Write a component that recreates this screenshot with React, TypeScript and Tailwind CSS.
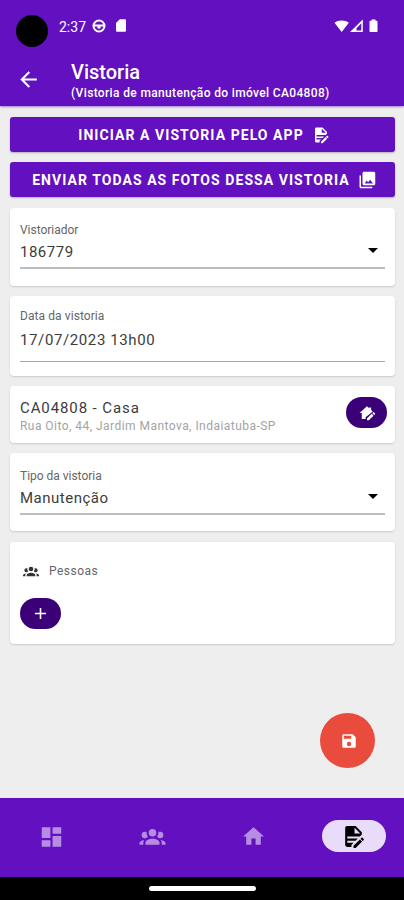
import type { ReactNode } from 'react';

const paths = {
  back: 'M20,11V13H8L13.5,18.5L12.08,19.92L4.16,12L12.08,4.08L13.5,5.5L8,11H20Z',
  fileEdit:
    'M6,2C4.89,2 4,2.89 4,4V20A2,2 0 0,0 6,22H10V20.09L12.09,18H6V16H14.09L16.09,14H6V12H18.09L20,10.09V8L14,2H6M13,3.5L18.5,9H13V3.5M20.15,13C20,13 19.86,13.05 19.75,13.16L18.73,14.18L20.82,16.26L21.84,15.25C22.05,15.03 22.05,14.67 21.84,14.46L20.54,13.16C20.43,13.05 20.29,13 20.15,13M18.14,14.77L12,20.92V23H14.08L20.23,16.85L18.14,14.77Z',
  photos: 'M23,17V3C23,1.900 22.100,1 21,1H8C6.9,1 6,1.900 6,3V17C6,18.100 6.9,19 8,19H21C22.100,19 23,18.100 23,17M11.500,12.500L13.500,15L16.200,11.700L20,16.500H9L11.500,12.500M2,6V21C2,22.100 2.9,23 4,23H19V21H4V6H2Z',
  homeEdit:
    'M12,3L2,12H5V20H10.2V17.6L19.7,9.9L17.5,7.95V4.5H15V5.7L12,3M20.8,10.9C20.6,10.9 20.4,11 20.3,11.1L19.1,12.3L21.5,14.7L22.7,13.5C22.9,13.2 22.9,12.9 22.7,12.6L21.2,11.1C21.1,11 21,10.9 20.8,10.9M18.3,13.1L12,19.2V21.6H14.4L20.7,15.5L18.3,13.1Z',
  group:
    'M12,5.5A3.5,3.5 0 0,1 15.5,9A3.5,3.5 0 0,1 12,12.5A3.5,3.5 0 0,1 8.5,9A3.5,3.5 0 0,1 12,5.5M5,8C5.56,8 6.08,8.15 6.53,8.42C6.38,9.85 6.8,11.27 7.66,12.38C7.16,13.34 6.16,14 5,14A3,3 0 0,1 2,11A3,3 0 0,1 5,8M19,8A3,3 0 0,1 22,11A3,3 0 0,1 19,14C17.84,14 16.84,13.34 16.34,12.38C17.2,11.27 17.62,9.85 17.47,8.42C17.92,8.15 18.44,8 19,8M5.5,18.25C5.5,16.18 8.41,14.5 12,14.5C15.59,14.5 18.5,16.18 18.5,18.25V20H5.5V18.25M0,20V18.5C0,17.11 1.89,15.94 4.45,15.6C3.86,16.28 3.5,17.22 3.5,18.25V20H0M24,20H20.5V18.25C20.5,17.22 20.14,16.28 19.55,15.6C22.11,15.94 24,17.11 24,18.5V20Z',
  plus: 'M19,13H13V19H11V13H5V11H11V5H13V11H19V13Z',
  save: 'M15,9H5V5H15M12,19A3,3 0 0,1 9,16A3,3 0 0,1 12,13A3,3 0 0,1 15,16A3,3 0 0,1 12,19M17,3H5C3.89,3 3,3.9 3,5V19A2,2 0 0,0 5,21H19A2,2 0 0,0 21,19V7L17,3Z',
  dashboard: 'M13,3V9H21V3M13,21H21V11H13M3,21H11V15H3M3,13H11V3H3V13Z',
  home: 'M10,20V14H14V20H19V12H22L12,3L2,12H5V20H10Z',
  sdCard: 'M18,2H10L4,8V20C4,21.1 4.9,22 6,22H18C19.1,22 20,21.1 20,20V4C20,2.9 19.1,2 18,2Z',
};

interface IconProps {
  name: keyof typeof paths;
  className: string;
}

function Icon({ name, className }: IconProps) {
  return (
    <svg viewBox="0 0 24 24" fill="currentColor" fillRule="evenodd" className={`shrink-0 ${className}`}>
      <path d={paths[name]} />
    </svg>
  );
}

function StatusBar() {
  return (
    <div className="flex h-[52px] items-start pl-4 pr-[26px] pt-[15px]">
      <div className="h-8 w-8 rounded-full bg-black" />
      <span className="ml-[11px] mt-[1px] text-[14px] leading-[22px]">2:37</span>
      <svg viewBox="0 0 14 14" className="ml-1.5 mt-1 h-3.5 w-3.5" fill="none" stroke="currentColor" strokeWidth="2">
        <circle cx="7" cy="7" r="5.5" />
        <path d="M2 6.5h10M5.5 8.5h3" />
      </svg>
      <Icon name="sdCard" className="ml-[7px] mt-[3px] h-[15px] w-4" />
      <svg viewBox="0 0 44 14" className="ml-auto mt-1 h-3.5 w-11" fill="currentColor">
        <path d="M.5 3.7C4.3.6 11 .6 14.8 3.7L7.7 13Z" />
        <path fillRule="evenodd" d="M28.8.5V13H16ZM27.3 4.3L22.5 9.2V11.5H27.3Z" />
        <path d="M37.5.5h4v1.2h1.2q.8 0 .8.8v9.7q0 .8-.8.8h-6.4q-.8 0-.8-.8V2.5q0-.8.8-.8h1.2Z" />
      </svg>
    </div>
  );
}

function ActionButton({ label, icon }: { label: string; icon: keyof typeof paths }) {
  return (
    <button className="flex h-[35px] w-full items-center justify-center rounded-[3px] bg-[#6210c0] pl-[3px] text-white shadow-[0_1px_2px_#00000040]">
      <span className="whitespace-nowrap pt-px text-[14px] font-bold tracking-[1.06px]">{label}</span>
      <Icon name={icon} className="ml-2 h-[18px] w-[18px]" />
    </button>
  );
}

function Card({ className, children }: { className: string; children: ReactNode }) {
  return <section className={`rounded-[4px] bg-white px-2.5 shadow-[0_1px_2px_#00000026] ${className}`}>{children}</section>;
}

function SelectField({ label, value }: { label: string; value: string }) {
  return (
    <>
      <div className="text-[12px] leading-4 tracking-[-0.02px] text-[#666]">{label}</div>
      <div className="mt-[3px] flex h-7 items-start justify-between border-b-2 border-[#bdbdbd] pr-[7px]">
        <span className="text-[15px] leading-[22px] tracking-[0.5px] text-[#3c3c3c]">{value}</span>
        <svg viewBox="0 0 10 5" className="mt-[7px] h-[5px] w-2.5">
          <path d="M0 0h10L5 5Z" />
        </svg>
      </div>
    </>
  );
}

export default function App() {
  return (
    <div className="flex h-[900px] w-[404px] flex-col overflow-hidden bg-[#eeeeee] font-['Roboto','Liberation_Sans',sans-serif]">
      <header className="h-[106px] shrink-0 bg-[#6210c0] text-white shadow-[0_1px_2px_#6210c080]">
        <StatusBar />
        <div className="flex">
          <Icon name="back" className="ml-4 mt-[15px] h-[25px] w-[25px]" />
          <div className="ml-[30px] mt-2">
            <h1 className="text-[20px] font-medium leading-[25px]">Vistoria</h1>
            <p className="whitespace-nowrap text-[12px] font-medium leading-[17px] tracking-[0.35px]">(Vistoria de manutenção do imóvel CA04808)</p>
          </div>
        </div>
      </header>

      <main className="flex flex-1 flex-col pl-2.5 pr-[9px] pt-[11px]">
        <ActionButton label="INICIAR A VISTORIA PELO APP" icon="fileEdit" />
        <div className="h-2.5 shrink-0" />
        <ActionButton label="ENVIAR TODAS AS FOTOS DESSA VISTORIA" icon="photos" />

        <Card className="mt-[11px] h-[78px] pt-[14px]">
          <SelectField label="Vistoriador" value="186779" />
        </Card>

        <Card className="mt-2.5 h-20 pt-3">
          <div className="text-[12px] leading-4 tracking-[0.08px] text-[#666]">Data da vistoria</div>
          <div className="mt-1 h-[34px] border-b border-[#a8a8a8] pt-px text-[15px] leading-[22px] tracking-[0.61px] text-[#3c3c3c]">
            17/07/2023 13h00
          </div>
        </Card>

        <Card className="mt-2.5 flex h-[57px] items-start justify-between">
          <div className="pt-[11px]">
            <div className="text-[15px] leading-[22px] tracking-[0.9px] text-[#3c3c3c]">CA04808 - Casa</div>
            <div className="whitespace-nowrap text-[12px] leading-[15px] tracking-[0.46px] text-[#a3a3a3]">
              Rua Oito, 44, Jardim Mantova, Indaiatuba-SP
            </div>
          </div>
          <button className="-mr-0.5 mt-[11px] flex h-[31px] w-[41px] items-center justify-center rounded-full bg-[#3b0078] text-white">
            <Icon name="homeEdit" className="h-[18px] w-[18px]" />
          </button>
        </Card>

        <Card className="mt-2.5 h-[78px] pt-[15px]">
          <SelectField label="Tipo da vistoria" value="Manutenção" />
        </Card>

        <Card className="mt-[11px] h-[102px] pt-5">
          <div className="flex h-[18px] items-center">
            <Icon name="group" className="ml-[3px] h-4 w-4 text-[#333]" />
            <span className="ml-2.5 text-[12px] tracking-[0.5px] text-[#666]">Pessoas</span>
          </div>
          <button className="mt-[18px] flex h-[31px] w-[41px] items-center justify-center rounded-full bg-[#3b0078] text-white">
            <Icon name="plus" className="h-[19px] w-[19px]" />
          </button>
        </Card>

        <button className="mr-5 mt-[69px] flex h-[55px] w-[55px] items-center justify-center self-end rounded-full bg-[#e94b3c] text-white">
          <Icon name="save" className="ml-0.5 h-[18px] w-[18px]" />
        </button>
      </main>

      <nav className="grid h-[79px] shrink-0 grid-cols-4 bg-[#6210c0] pl-px text-[#b78de3]">
        <div className="flex items-start justify-center pt-[26px]">
          <Icon name="dashboard" className="h-[26px] w-[27px]" />
        </div>
        <div className="flex items-start justify-center pt-[25px]">
          <Icon name="group" className="h-[26px] w-[27px]" />
        </div>
        <div className="flex items-start justify-center pl-px pt-[26px]">
          <Icon name="home" className="h-[25px] w-[25px]" />
        </div>
        <div className="flex items-start justify-center pt-[22px]">
          <div className="flex h-8 w-16 items-center justify-center rounded-full bg-[#e8dcfa] text-black">
            <Icon name="fileEdit" className="h-[25px] w-[25px]" />
          </div>
        </div>
      </nav>
      <div className="flex h-[23px] shrink-0 justify-center bg-black pt-[9px]">
        <div className="h-[5px] w-[107px] rounded-full bg-white" />
      </div>
    </div>
  );
}
